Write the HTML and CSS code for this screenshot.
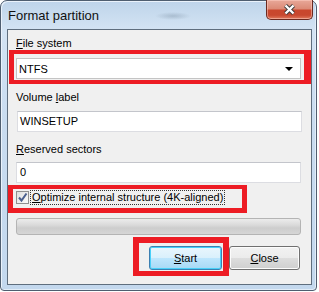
FILE: index.html
```html
<!DOCTYPE HTML>
<html>
    <head>
        <title>Format partition</title>
        <link rel="stylesheet" href="styles.css">
    </head>

    <body>
        <div class="window">
            <div class="titlebar">
                <span class="title">Format partition</span>
                <button class="close-x">
                    <svg width="13" height="11" viewBox="0 0 13 11">
                        <path d="M2.5 1.5 L10.5 9.5 M10.5 1.5 L2.5 9.5" stroke="#3a3a3a" stroke-width="4.2" fill="none"/>
                        <path d="M2.5 1.5 L10.5 9.5 M10.5 1.5 L2.5 9.5" stroke="#fff" stroke-width="2.4" fill="none"/>
                    </svg>
                </button>
            </div>

            <div class="client">
                <div class="field-label"><u>F</u>ile system</div>
                <div class="combo">
                    <span>NTFS</span>
                    <span class="arrow"></span>
                </div>

                <div class="field-label label-gap">Volume <u>l</u>abel</div>
                <div class="textbox shifted">WINSETUP</div>

                <div class="field-label label-gap-small"><u>R</u>eserved sectors</div>
                <div class="textbox second">0</div>

                <div class="check-row">
                    <span class="checkbox">
                        <svg width="11" height="11" viewBox="0 0 11 11">
                            <path d="M2 5.5 L4.5 8.5 L9.5 1.5" stroke="#4a5f8e" stroke-width="2" fill="none"/>
                        </svg>
                    </span>
                    <span class="check-text"><u>O</u>ptimize internal structure (4K-aligned)</span>
                </div>

                <div class="progress"></div>

                <div class="buttons">
                    <button class="btn btn-default"><u>S</u>tart</button>
                    <button class="btn btn-close"><u>C</u>lose</button>
                </div>
            </div>
        </div>

        <!-- red annotation boxes drawn over the dialog -->
        <div class="mark mark-fs"></div>
        <div class="mark mark-check"></div>
        <div class="mark mark-start"></div>
    </body>
</html>
```

FILE: styles.css
```css
body {
    margin: 0;
    background: #fff;
    font-family: "Liberation Sans", Arial, sans-serif;
    font-size: 11px;
    color: #000;
}
.window {
    width: 317px;
    height: 291px;
    box-sizing: border-box;
    border: 1px solid #4f5e70;
    border-radius: 7px 7px 4px 4px;
    padding: 0 4px 5px 6px;
    display: flex;
    flex-direction: column;
    background:
        radial-gradient(ellipse 18px 4px at 172px 15px, rgba(110, 130, 150, 0.35), transparent),
        linear-gradient(to bottom, #bed4ea 0, #d3e3f3 28px, #c9dcf0 120px, #c3d8ee 100%);
    box-shadow: inset 1px 1px 0 #eaf2fb, inset -1px -1px 0 #e2edf8;
}
.titlebar {
    height: 28px;
    display: flex;
    align-items: center;
}
.title {
    font-size: 13px;
    padding-left: 1px;
    color: #111;
}
.close-x {
    margin-left: auto;
    margin-right: -1px;
    margin-top: -1px;
    align-self: flex-start;
    width: 47px;
    height: 20px;
    padding: 0;
    border: 1px solid #6b2a20;
    border-top: none;
    border-radius: 0 0 5px 5px;
    background: linear-gradient(to bottom, #e8a899 0, #dc8b77 45%, #c9472d 55%, #c8482f 80%, #e07a5d 100%);
    box-shadow: inset 0 0 0 1px rgba(255, 210, 200, 0.5);
    display: flex;
    align-items: center;
    justify-content: center;
}
.client {
    flex: none;
    height: 256px;
    box-sizing: border-box;
    border: 1px solid #5f6e7e;
    background: #f0f0f0;
    padding: 6px 10px 0 8px;
    display: flex;
    flex-direction: column;
}
.field-label {
    height: 15px;
    line-height: 15px;
}
.label-gap {
    margin-top: 11px;
}
.label-gap-small {
    margin-top: 10px;
}
.combo {
    margin-top: 7px;
    height: 21px;
    box-sizing: border-box;
    border: 1px solid #c4c4c4;
    background: #fff;
    display: flex;
    align-items: center;
    padding: 0 7px 0 2px;
}
.combo .arrow {
    margin-left: auto;
    width: 0;
    height: 0;
    border-left: 4px solid transparent;
    border-right: 4px solid transparent;
    border-top: 4px solid #000;
}
.textbox {
    margin-top: 6px;
    height: 21px;
    box-sizing: border-box;
    border: 1px solid #dcdde2;
    border-top-color: #c3c5cb;
    background: #fff;
    line-height: 19px;
    padding-left: 2px;
}
.textbox.shifted {
    margin-left: 1px;
    margin-right: -1px;
}
.textbox.second {
    margin-top: 5px;
    padding-left: 3px;
}
.check-row {
    margin-top: 7px;
    height: 15px;
    display: flex;
    align-items: center;
}
.checkbox {
    width: 13px;
    height: 13px;
    box-sizing: border-box;
    border: 1px solid #8f8f8f;
    background: linear-gradient(135deg, #dedede, #fbfbfb);
    display: flex;
    align-items: center;
    justify-content: center;
}
.check-text {
    margin-left: 2px;
    padding: 0 1px;
    line-height: 13px;
    outline: 1px dotted #333;
}
.progress {
    margin-top: 13px;
    height: 17px;
    box-sizing: border-box;
    border: 1px solid #b4b4b4;
    border-radius: 3px;
    background: linear-gradient(to bottom, #ececec 0, #dadada 40%, #cdcdcd 60%, #d6d6d6 100%);
}
.buttons {
    margin-top: 11px;
    margin-right: 1px;
    display: flex;
    justify-content: flex-end;
    gap: 7px;
}
.btn {
    height: 24px;
    padding: 0;
    font-family: "Liberation Sans", Arial, sans-serif;
    font-size: 11px;
    color: #000;
    border: 1px solid #707070;
    border-radius: 3px;
    background: linear-gradient(to bottom, #f2f2f2 0, #ebebeb 50%, #dddddd 51%, #cfcfcf 100%);
    box-shadow: inset 0 0 0 1px #fcfcfc;
}
.btn-default {
    width: 73px;
    border-color: #3c7fb1;
    background: linear-gradient(to bottom, #eaf6fd 0, #d9f0fc 50%, #bee6fd 51%, #a7d9f5 100%);
    box-shadow: inset 0 0 0 1px #48d0f9;
}
.btn-close {
    width: 71px;
}
.mark {
    position: absolute;
    box-sizing: border-box;
    border: solid #ed1c24;
}
.mark-fs {
    left: 9px;
    top: 50px;
    width: 302px;
    height: 34px;
    border-width: 4px 7px 4px 5px;
}
.mark-check {
    left: 8px;
    top: 185px;
    width: 239px;
    height: 28px;
    border-width: 4px 5px 5px 5px;
}
.mark-start {
    left: 133px;
    top: 237px;
    width: 96px;
    height: 39px;
    border-width: 6px 6px 5px 6px;
}
```
